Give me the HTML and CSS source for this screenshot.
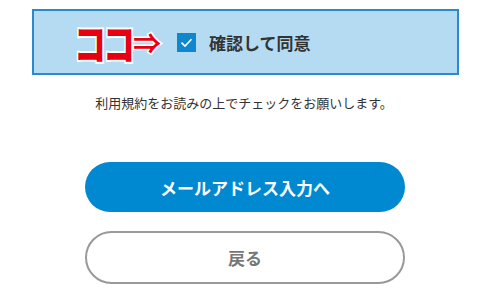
FILE: index.html
```html
<!DOCTYPE html>
<html lang="ja">
<head>
<meta charset="utf-8">
<link rel="stylesheet" href="styles.css">
</head>
<body>
<div class="page">
  <div class="agree-box">
    <span class="koko">ココ</span>
    <span class="arrow">⇒</span>
    <span class="checkbox">
      <svg viewBox="0 0 19 19" width="19" height="19"><path d="M4.5 9.6 L8 13 L14.5 6.3" fill="none" stroke="#fff" stroke-width="1.6"/></svg>
    </span>
    <span class="agree-label">確認して同意</span>
  </div>
  <p class="note">利用規約をお読みの上でチェックをお願いします。</p>
  <div class="actions">
    <button class="btn btn-primary">メールアドレス入力へ</button>
    <button class="btn btn-back">戻る</button>
  </div>
</div>
</body>
</html>
```
FILE: styles.css
```css
html, body {
  margin: 0;
  padding: 0;
  background: #fff;
}
body {
  font-family: "Noto Sans CJK JP", "Noto Sans", sans-serif;
  color: #333;
}
.page {
  width: 488px;
  padding-top: 9px;
}
.agree-box {
  margin-left: 32px;
  width: 427px;
  height: 66px;
  box-sizing: border-box;
  border: 2px solid #2a8bcc;
  background: #b4dbf2;
  display: flex;
  align-items: center;
  padding-left: 40px;
}
.koko {
  font-size: 32px;
  font-weight: 900;
  color: #e60012;
  letter-spacing: -3px;
  -webkit-text-stroke: 3px #fff;
  paint-order: stroke fill;
  display: inline-block;
  transform: scaleY(1.3);
  line-height: 1;
}
.arrow {
  font-size: 28px;
  font-weight: 700;
  color: #e60012;
  -webkit-text-stroke: 3px #fff;
  paint-order: stroke fill;
  line-height: 1;
  margin-left: 1px;
}
.checkbox {
  width: 19px;
  height: 19px;
  background: #0f87cf;
  margin-left: 16px;
  display: flex;
}
.agree-label {
  margin-left: 13px;
  font-size: 17px;
  font-weight: 700;
  color: #333;
}
.note {
  margin: 18px 0 0;
  text-align: center;
  font-size: 13px;
  line-height: 20px;
  color: #333;
}
.actions {
  margin-top: 49px;
  padding-left: 85px;
  display: flex;
  flex-direction: column;
  gap: 19px;
}
.btn {
  width: 320px;
  box-sizing: border-box;
  font-family: inherit;
  font-size: 17px;
  font-weight: 700;
  padding: 0;
  cursor: pointer;
}
.btn-primary {
  height: 50px;
  border: none;
  border-radius: 25px;
  background: #0088d1;
  color: #fff;
}
.btn-back {
  height: 53px;
  border: 2px solid #999;
  border-radius: 27px;
  background: #fff;
  color: #777;
}
```
